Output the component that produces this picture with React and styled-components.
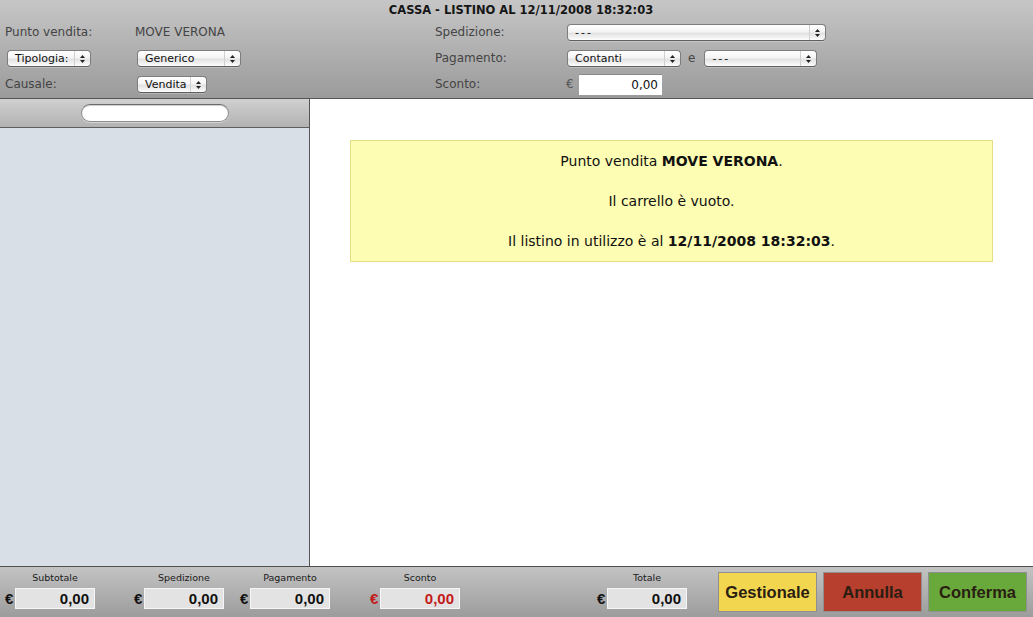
import styled, { createGlobalStyle } from "styled-components";

const GlobalStyle = createGlobalStyle`
  html, body, #root {
    height: 100%;
  }
  body {
    margin: 0;
    overflow: hidden;
    font-family: "DejaVu Sans", "Liberation Sans", sans-serif;
  }
`

const totals = [
  { label: "Subtotale", value: "0,00", offset: 0 },
  { label: "Spedizione", value: "0,00", offset: 39 },
  { label: "Pagamento", value: "0,00", offset: 16 },
  { label: "Sconto", value: "0,00", offset: 40, red: true },
  { label: "Totale", value: "0,00", offset: 137 },
]

function Select({ value, width }) {
  return (
    <SelectBox $width={width}>
      <SelectText $spaced={value === "---"}>{value}</SelectText>
      <Arrows>
        <svg width="7" height="10" viewBox="0 0 7 10">
          <polygon points="1,4 3.5,1 6,4" fill="#222" />
          <polygon points="1,6 3.5,9 6,6" fill="#222" />
        </svg>
      </Arrows>
    </SelectBox>
  )
}

export default function App() {
  return (
    <Window>
      <GlobalStyle />
      <Header>
        <Title>CASSA - LISTINO AL 12/11/2008 18:32:03</Title>
        <Form>
          <Label>Punto vendita:</Label>
          <Label>MOVE VERONA</Label>
          <Label>Spedizione:</Label>
          <Cell>
            <Select value="---" width={259} />
          </Cell>

          <Cell>
            <Select value="Tipologia:" width={84} />
          </Cell>
          <Cell>
            <Select value="Generico" width={104} />
          </Cell>
          <Label>Pagamento:</Label>
          <Cell>
            <Select value="Contanti" width={114} />
            <And>e</And>
            <Select value="---" width={113} />
          </Cell>

          <Label>Causale:</Label>
          <Cell>
            <Select value="Vendita" width={70} />
          </Cell>
          <Label>Sconto:</Label>
          <Cell>
            <Currency>€</Currency>
            <Amount>0,00</Amount>
          </Cell>
        </Form>
      </Header>

      <Main>
        <Sidebar>
          <SidebarBar>
            <Search />
          </SidebarBar>
          <SidebarList />
        </Sidebar>
        <Content>
          <Notice>
            <Line>
              Punto vendita <b>MOVE VERONA</b>.
            </Line>
            <Line>Il carrello è vuoto.</Line>
            <Line>
              Il listino in utilizzo è al <b>12/11/2008 18:32:03</b>.
            </Line>
          </Notice>
        </Content>
      </Main>

      <Footer>
        {totals.map((t) => (
          <Total key={t.label} $offset={t.offset}>
            <TotalLabel>{t.label}</TotalLabel>
            <Euro $red={t.red}>€</Euro>
            <TotalValue $red={t.red}>{t.value}</TotalValue>
          </Total>
        ))}
        <Buttons>
          <Button $bg="#f3d64f">Gestionale</Button>
          <Button $bg="#b73f2e">Annulla</Button>
          <Button $bg="#69a83b">Conferma</Button>
        </Buttons>
      </Footer>
    </Window>
  )
}

const Window = styled.div`
  display: flex;
  flex-direction: column;
  height: 100vh;
  width: 100vw;
`
const Header = styled.div`
  height: 98px;
  flex-shrink: 0;
  background: linear-gradient(#c6c6c6, #9b9b9b);
  border-bottom: 1px solid #555555;
`
const Title = styled.div`
  height: 19px;
  line-height: 20px;
  text-align: center;
  padding-left: 9px;
  font-weight: bold;
  font-size: 11.5px;
  color: #151515;
`
const Form = styled.div`
  display: grid;
  grid-template-columns: 130px 300px 130px 1fr;
  grid-auto-rows: 26px;
  padding-left: 5px;
`
const Label = styled.div`
  display: flex;
  align-items: center;
  font-size: 12px;
  color: #444444;
`
const Cell = styled.div`
  display: flex;
  align-items: center;
`
const SelectBox = styled.div`
  display: flex;
  align-items: stretch;
  box-sizing: border-box;
  width: ${(p) => p.$width}px;
  height: 17px;
  margin-left: 2px;
  margin-top: 1px;
  border: 1px solid #7d7d7d;
  border-bottom-color: #5f5f5f;
  border-radius: 4px;
  background: linear-gradient(#ffffff 0%, #f4f4f4 45%, #e2e2e2 55%, #f3f3f3 85%, #ffffff 100%);
  box-shadow: 0 1px 0 rgba(255, 255, 255, 0.25);
  overflow: hidden;
`
const SelectText = styled.div`
  flex: 1;
  padding-left: 7px;
  font-size: 11px;
  line-height: 15px;
  letter-spacing: ${(p) => (p.$spaced ? "2px" : "0")};
  color: #111111;
  white-space: nowrap;
`
const Arrows = styled.div`
  width: 15px;
  display: flex;
  align-items: center;
  justify-content: center;
  border-left: 1px solid #cfcfcf;
`
const And = styled.span`
  margin: 0 7px 0 7px;
  font-size: 12px;
  color: #444444;
`
const Currency = styled.span`
  margin-left: 1px;
  width: 13px;
  font-size: 12px;
  color: #555555;
`
const Amount = styled.div`
  box-sizing: border-box;
  width: 83px;
  height: 21px;
  line-height: 21px;
  padding-right: 4px;
  text-align: right;
  background: #ffffff;
  border-top: 1px solid #8a8a8a;
  font-size: 12px;
  color: #111111;
`
const Main = styled.div`
  flex: 1;
  display: flex;
  min-height: 0;
`
const Sidebar = styled.div`
  width: 309px;
  flex-shrink: 0;
  display: flex;
  flex-direction: column;
  border-right: 1px solid #555555;
`
const SidebarBar = styled.div`
  height: 28px;
  display: flex;
  align-items: center;
  justify-content: center;
  background: linear-gradient(#d0d0d0, #b2b2b2);
  border-bottom: 1px solid #5e5e5e;
`
const Search = styled.div`
  box-sizing: border-box;
  width: 148px;
  height: 18px;
  border-radius: 9px;
  background: #ffffff;
  border: 1px solid #8c8c8c;
  border-top-color: #6a6a6a;
  box-shadow: inset 0 1px 1px rgba(0, 0, 0, 0.2), 0 1px 0 rgba(255, 255, 255, 0.4);
`
const SidebarList = styled.div`
  flex: 1;
  background: #d8dfe6;
`
const Content = styled.div`
  flex: 1;
  background: #ffffff;
  padding: 41px 40px 0 40px;
`
const Notice = styled.div`
  display: flex;
  flex-direction: column;
  gap: 20px;
  padding: 10px;
  background: #fdfdb3;
  border: 1px solid #e4df86;
  text-align: center;
`
const Line = styled.div`
  line-height: 20px;
  font-size: 14px;
  color: #111111;
`
const Footer = styled.div`
  height: 50px;
  flex-shrink: 0;
  display: flex;
  align-items: flex-start;
  padding-left: 5px;
  background: linear-gradient(#c3c3c3, #9c9c9c);
  border-top: 1px solid #4f4f4f;
`
const Total = styled.div`
  display: grid;
  grid-template-columns: 10px 80px;
  grid-template-rows: 12px 21px;
  row-gap: 5px;
  align-items: center;
  margin-left: ${(p) => p.$offset}px;
  padding-top: 4px;
`
const TotalLabel = styled.div`
  grid-column: 2;
  text-align: center;
  font-size: 9.5px;
  color: #1a1a1a;
`
const Euro = styled.div`
  grid-column: 1;
  font-family: "Liberation Sans", sans-serif;
  font-weight: bold;
  font-size: 15px;
  color: ${(p) => (p.$red ? "#c41a1a" : "#111111")};
`
const TotalValue = styled.div`
  grid-column: 2;
  box-sizing: border-box;
  height: 21px;
  line-height: 19px;
  padding-right: 5px;
  text-align: right;
  background: #e3e3e3;
  border: 1px solid #f6f6f6;
  font-family: "Liberation Sans", sans-serif;
  font-weight: bold;
  font-size: 15px;
  color: ${(p) => (p.$red ? "#c41a1a" : "#111111")};
`
const Buttons = styled.div`
  display: flex;
  gap: 6px;
  margin-left: 31px;
  margin-top: 5px;
`
const Button = styled.button`
  width: 99px;
  height: 40px;
  padding: 0;
  background: ${(p) => p.$bg};
  border: 1px solid #8f8f8f;
  border-radius: 0;
  font-family: "Liberation Sans", sans-serif;
  font-weight: bold;
  font-size: 16.5px;
  color: #2a1d12;
  cursor: pointer;
`
